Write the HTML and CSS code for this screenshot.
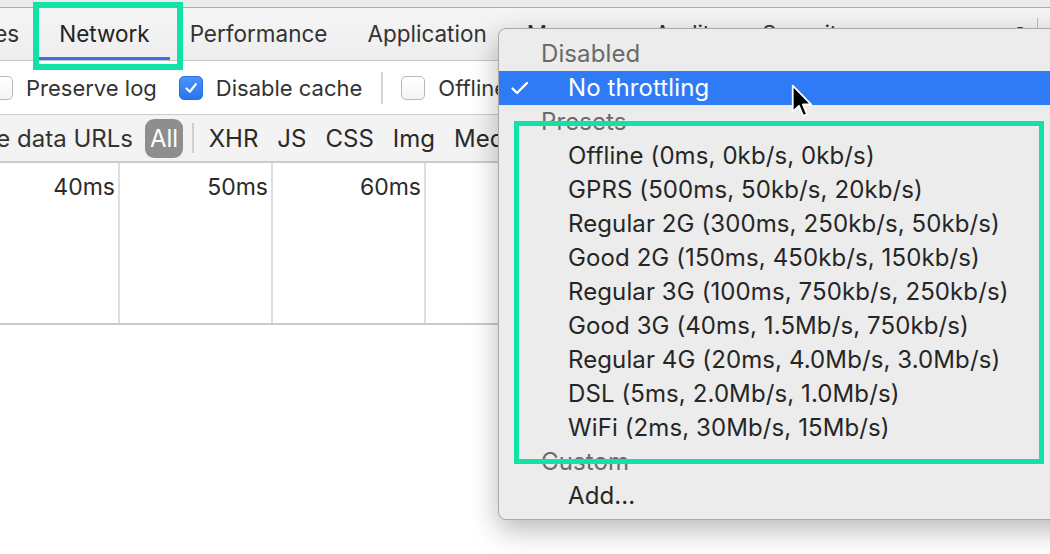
FILE: index.html
```html
<!DOCTYPE html>
<html>
<head>
<meta charset="utf-8">
<link rel="stylesheet" href="styles.css">
</head>
<body>
<div class="devtools">
  <div class="topstrip"></div>
  <div class="tabbar">
    <div class="tab first">Sources</div>
    <div class="tab active">Network</div>
    <div class="tab">Performance</div>
    <div class="tab">Application</div>
    <div class="tab">Memory</div>
    <div class="tab">Audits</div>
    <div class="tab">Security</div>
    <div class="spacer"></div>
    <div class="warn">
      <svg class="warn-icon" width="18" height="16" viewBox="0 0 18 16"><path d="M9 1 L17 15 L1 15 Z" fill="#f2b01e"/></svg>
      <span>2</span>
    </div>
    <div class="vsep"></div>
  </div>
  <div class="toolbar">
    <label class="check first-check"><span class="box"></span><span>Preserve log</span></label>
    <label class="check"><span class="box checked"><svg width="16" height="16" viewBox="0 0 16 16"><path d="M3.5 8.5 L6.8 11.8 L12.8 4.2" fill="none" stroke="#fff" stroke-width="2.2" stroke-linecap="round" stroke-linejoin="round"/></svg></span><span>Disable cache</span></label>
    <span class="tsep"></span>
    <label class="check"><span class="box"></span><span>Offline</span></label>
  </div>
  <div class="filterbar">
    <span class="filter-label">Hide data URLs</span>
    <span class="pill">All</span>
    <span class="fsep"></span>
    <span class="filter">XHR</span>
    <span class="filter">JS</span>
    <span class="filter">CSS</span>
    <span class="filter">Img</span>
    <span class="filter">Media</span>
  </div>
  <div class="timeline">
    <div class="col"><span>40ms</span></div>
    <div class="col"><span>50ms</span></div>
    <div class="col"><span>60ms</span></div>
    <div class="col"></div>
    <div class="col"></div>
    <div class="col"></div>
    <div class="col"></div>
  </div>
</div>

<div class="menu">
  <div class="mhead">Disabled</div>
  <div class="mitem selected"><svg class="mcheck" width="20" height="16" viewBox="0 0 20 16"><path d="M2.5 8.5 L7 13 L17 3" fill="none" stroke="#fff" stroke-width="2.4" stroke-linecap="round" stroke-linejoin="round"/></svg><span>No throttling</span></div>
  <div class="mhead">Presets</div>
  <div class="mitem">Offline (0ms, 0kb/s, 0kb/s)</div>
  <div class="mitem">GPRS (500ms, 50kb/s, 20kb/s)</div>
  <div class="mitem">Regular 2G (300ms, 250kb/s, 50kb/s)</div>
  <div class="mitem">Good 2G (150ms, 450kb/s, 150kb/s)</div>
  <div class="mitem">Regular 3G (100ms, 750kb/s, 250kb/s)</div>
  <div class="mitem">Good 3G (40ms, 1.5Mb/s, 750kb/s)</div>
  <div class="mitem">Regular 4G (20ms, 4.0Mb/s, 3.0Mb/s)</div>
  <div class="mitem">DSL (5ms, 2.0Mb/s, 1.0Mb/s)</div>
  <div class="mitem">WiFi (2ms, 30Mb/s, 15Mb/s)</div>
  <div class="mhead">Custom</div>
  <div class="mitem">Add...</div>
</div>

<div class="hl hl-network"></div>
<div class="hl hl-presets"></div>

<svg class="cursor" width="23" height="35" viewBox="0 0 14 21.5">
  <path d="M1 1 L1 17 L4.8 13.4 L7.4 19.6 L9.8 18.6 L7.2 12.6 L12.4 12.6 Z" fill="#000" stroke="#fff" stroke-width="1.1" stroke-linejoin="round"/>
</svg>
</body>
</html>
```

FILE: styles.css
```css
* { box-sizing: border-box; }
html, body {
  margin: 0;
  padding: 0;
  width: 1050px;
  height: 554px;
  overflow: hidden;
  background: #fff;
}
body {
  font-family: Inter, "Noto Sans", sans-serif;
  font-size: 22px;
  color: #262626;
  position: relative;
}

.devtools { width: 1050px; }

.topstrip {
  height: 8px;
  background: #ececec;
  border-bottom: 1px solid #acacac;
}

.tabbar {
  height: 53px;
  display: flex;
  align-items: stretch;
  background: linear-gradient(#f5f5f5, #eeeeee);
  border-bottom: 1px solid #c6c6c6;
  white-space: nowrap;
  font-size: 22.5px;
}
.tab {
  display: flex;
  align-items: center;
  padding: 0 20px;
  color: #333;
  border-bottom: 3px solid transparent;
  padding-top: 2px;
}
.tab.first { margin-left: -88px; }
.tab.active {
  color: #222;
  border-bottom-color: #3d6fdf;
}
.spacer { flex: 1; }
.warn {
  display: flex;
  align-items: center;
  gap: 6px;
  padding-top: 2px;
  color: #333;
}
.vsep {
  width: 1px;
  background: #bcbcbc;
  margin: 10px 12px 20px 10px;
}

.toolbar {
  height: 53px;
  display: flex;
  align-items: center;
  background: #fff;
  white-space: nowrap;
  color: #333;
}
.check {
  display: flex;
  align-items: center;
  gap: 13px;
  margin-right: 22px;
}
.first-check { margin-left: -11px; }
.box {
  width: 24px;
  height: 24px;
  border-radius: 5px;
  border: 1px solid #b8b8b8;
  background: linear-gradient(#ffffff, #f4f4f4);
  display: flex;
  align-items: center;
  justify-content: center;
}
.box.checked {
  border: 1px solid #2a6fe6;
  background: linear-gradient(#4a93f9, #2774ef);
}
.tsep {
  width: 2px;
  height: 32px;
  background: #d4d4d4;
  margin: 0 18px 0 -3px;
}

.filterbar {
  height: 49px;
  display: flex;
  align-items: center;
  background: #f3f3f3;
  border-top: 1px solid #cbcbcb;
  border-bottom: 2px solid #cbcbcb;
  white-space: nowrap;
  color: #333;
  font-size: 24px;
}
.filter-label { margin-left: -42px; margin-right: 12px; }
.pill {
  background: #8e8e8e;
  color: #fff;
  border-radius: 9px;
  height: 39px;
  padding: 0 5px;
  display: flex;
  align-items: center;
}
.fsep {
  width: 2px;
  height: 30px;
  background: #cfcfcf;
  margin: 0 5px 0 9px;
}
.filter { padding: 0 9.5px; color: #2a2a2a; }

.timeline {
  height: 162px;
  display: flex;
  border-bottom: 2px solid #cacaca;
  margin-left: -33px;
  width: 1100px;
  font-size: 23px;
}
.col {
  flex: 0 0 153px;
  border-right: 2px solid #dedede;
  text-align: right;
  padding: 10px 3px 0 0;
  color: #2a2a2a;
}

.menu {
  position: absolute;
  left: 498px;
  top: 28px;
  width: 580px;
  height: 492px;
  background: #ececec;
  border: 1px solid #a9a9a9;
  border-radius: 8px;
  box-shadow: 0 10px 28px rgba(0, 0, 0, 0.28);
  padding-top: 8px;
  white-space: nowrap;
  font-size: 24px;
  letter-spacing: 0.1px;
}
.mhead {
  height: 34px;
  line-height: 34px;
  padding-left: 42px;
  color: #6a6a6a;
}
.mitem {
  height: 34px;
  line-height: 34px;
  padding-left: 69px;
  color: #262626;
  display: flex;
  align-items: center;
}
.mitem.selected {
  background: #2f7bf5;
  color: #fff;
  padding-left: 11px;
}
.mcheck { margin-right: 38px; }

.hl {
  position: absolute;
  border: 6px solid #12e2a6;
}
.hl-network { left: 33px; top: 2px; width: 150px; height: 68px; }
.hl-presets { left: 514px; top: 121px; width: 530px; height: 343px; border-width: 5px; }

.cursor {
  position: absolute;
  left: 791px;
  top: 84px;
}
```
